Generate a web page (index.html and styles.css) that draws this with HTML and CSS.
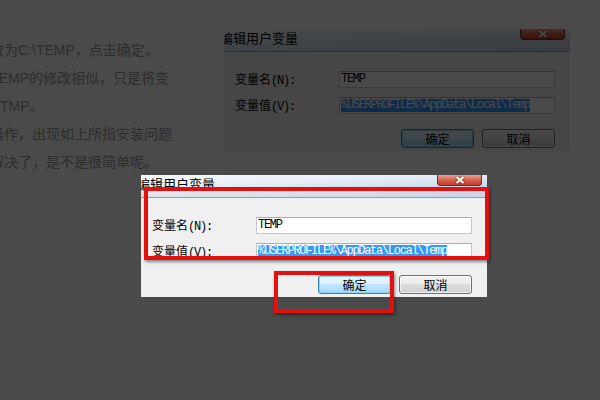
FILE: index.html
```html
<!DOCTYPE html>
<html lang="zh-CN">
<head>
<meta charset="utf-8">
<title>编辑用户变量</title>
<link rel="stylesheet" href="styles.css">
</head>
<body>
<div class="page">
  <div class="article">
    <p class="line">改为C:\TEMP，点击确定。</p>
    <p class="line">TEMP的修改相似，只是将变</p>
    <p class="line cont">为TMP。</p>
    <p class="line">操作，出现如上所指安装问题</p>
    <p class="line">解决了，是不是很简单呢。</p>
  </div>
  <div class="figure">
    <div class="dialog">
      <div class="titlebar">
        <span class="title">编辑用户变量</span>
        <span class="close"><svg width="10" height="8" viewBox="0 0 10 8"><path d="M1.5 1 8.5 7M8.5 1 1.5 7" stroke="#fff" stroke-width="2" fill="none"/></svg></span>
      </div>
      <div class="body">
        <div class="fields">
          <span class="label">变量名<span class="key">(N):</span></span>
          <div class="input"><span class="value">TEMP</span></div>
          <span class="label">变量值<span class="key">(V):</span></span>
          <div class="input"><span class="value selected">%USERPROFILE%\AppData\Local\Temp</span></div>
        </div>
        <div class="buttons">
          <button class="btn btn-default">确定</button>
          <button class="btn">取消</button>
        </div>
      </div>
    </div>
  </div>
</div>

<div class="shade"></div>

<div class="zoom">
  <div class="dialog">
    <div class="titlebar">
      <span class="title">编辑用户变量</span>
      <span class="close"><svg width="10" height="8" viewBox="0 0 10 8"><path d="M1.5 1 8.5 7M8.5 1 1.5 7" stroke="#fff" stroke-width="2" fill="none"/></svg></span>
    </div>
    <div class="body">
      <div class="fields">
        <span class="label">变量名<span class="key">(N):</span></span>
        <div class="input"><span class="value">TEMP</span></div>
        <span class="label">变量值<span class="key">(V):</span></span>
        <div class="input"><span class="value selected">%USERPROFILE%\AppData\Local\Temp</span></div>
      </div>
      <div class="buttons">
        <button class="btn btn-default">确定</button>
        <button class="btn">取消</button>
      </div>
    </div>
  </div>
  <span class="mark mark-fields"></span>
  <span class="mark mark-ok"></span>
</div>
</body>
</html>
```

FILE: styles.css
```css
html, body {
  margin: 0;
  height: 100%;
}

body {
  background: #fff;
  overflow: hidden;
  font-family: "Liberation Sans", "Noto Sans CJK SC", sans-serif;
}

/* article page underneath the lightbox */
.page {
  display: flex;
  align-items: flex-start;
}

.article {
  flex: none;
  width: 234px;
  margin-left: -10px;
  padding-top: 36px;
}

.line {
  margin: 0;
  font-size: 14px;
  line-height: 28px;
  color: #9a9a9a;
  white-space: nowrap;
}

.line.cont {
  text-indent: -4px;
}

.figure {
  margin-top: 29px;
}

/* lightbox shade */
.shade {
  position: fixed;
  inset: 0;
  background: rgba(0, 0, 0, 0.71);
}

.zoom {
  position: absolute;
  left: 141px;
  top: 175px;
}

/* Windows 7 style dialog */
.dialog {
  width: 346px;
  height: 122px;
  background: #f0f0f0;
  overflow: hidden;
  font-family: "Noto Sans CJK SC", sans-serif;
  color: #000;
}

.titlebar {
  display: flex;
  align-items: flex-start;
  height: 22px;
  border-bottom: 1px solid #8ea3b9;
  overflow: hidden;
  background:
    linear-gradient(180deg, rgba(255, 255, 255, 0.55), rgba(255, 255, 255, 0) 55%, rgba(200, 214, 230, 0.6)),
    linear-gradient(90deg, #edf2f8 0%, #d9e5f1 55%, #c6d8eb 100%);
}

.title {
  margin-left: -4px;
  font-size: 13px;
  line-height: 17px;
  white-space: nowrap;
}

.close {
  margin-left: auto;
  margin-right: 5px;
  width: 45px;
  height: 11px;
  box-sizing: border-box;
  border: 1px solid #6a2a20;
  border-top: none;
  border-radius: 0 0 4px 4px;
  background: linear-gradient(180deg, #e9a496 0%, #d45d48 55%, #c2402d 100%);
  display: flex;
  align-items: center;
  justify-content: center;
}

.close svg {
  display: block;
  filter: drop-shadow(0 0 1px rgba(60, 10, 0, 0.8));
}

.body {
  padding: 19px 15px 0 11px;
}

.fields {
  display: grid;
  grid-template-columns: 104px 216px;
  grid-auto-rows: 17px;
  row-gap: 9px;
  align-items: center;
}

.label {
  font-size: 12px;
  line-height: 17px;
  white-space: nowrap;
}

.key {
  font-family: "Liberation Mono", monospace;
  letter-spacing: -1.2px;
}

.input {
  height: 17px;
  box-sizing: border-box;
  border: 1px solid #c3c6cc;
  border-top-color: #abadb3;
  background: #fff;
  padding-left: 1px;
  display: flex;
  align-items: center;
}

.value {
  font-family: "Liberation Mono", monospace;
  font-size: 12px;
  letter-spacing: -1.3px;
  line-height: 13px;
  white-space: nowrap;
}

.value.selected {
  background: #3399ff;
  color: #fff;
}

.buttons {
  display: flex;
  justify-content: flex-end;
  gap: 8px;
  margin-top: 15px;
}

.btn {
  width: 73px;
  height: 19px;
  padding: 0;
  border: 1px solid #707070;
  border-radius: 3px;
  font-family: "Noto Sans CJK SC", sans-serif;
  font-size: 12px;
  line-height: 17px;
  color: #000;
  background: linear-gradient(180deg, #f2f2f2 0%, #ebebeb 50%, #dddddd 50%, #cfcfcf 100%);
  box-shadow: inset 0 0 0 1px rgba(255, 255, 255, 0.7);
}

.btn-default {
  border-color: #3c7fb1;
  background: linear-gradient(180deg, #eaf6fd 0%, #d9f0fc 50%, #bee6fd 50%, #a7d9f5 100%);
  box-shadow: inset 0 0 0 1px #88d4f2;
}

/* red annotation frames */
.mark {
  position: absolute;
  box-sizing: border-box;
  border: 4px solid #e3100f;
  box-shadow: 1px 2px 3px rgba(0, 0, 0, 0.45);
}

.mark-fields {
  left: 3px;
  top: 12px;
  width: 345px;
  height: 73px;
}

.mark-ok {
  left: 133px;
  top: 96px;
  width: 120px;
  height: 42px;
}
```
